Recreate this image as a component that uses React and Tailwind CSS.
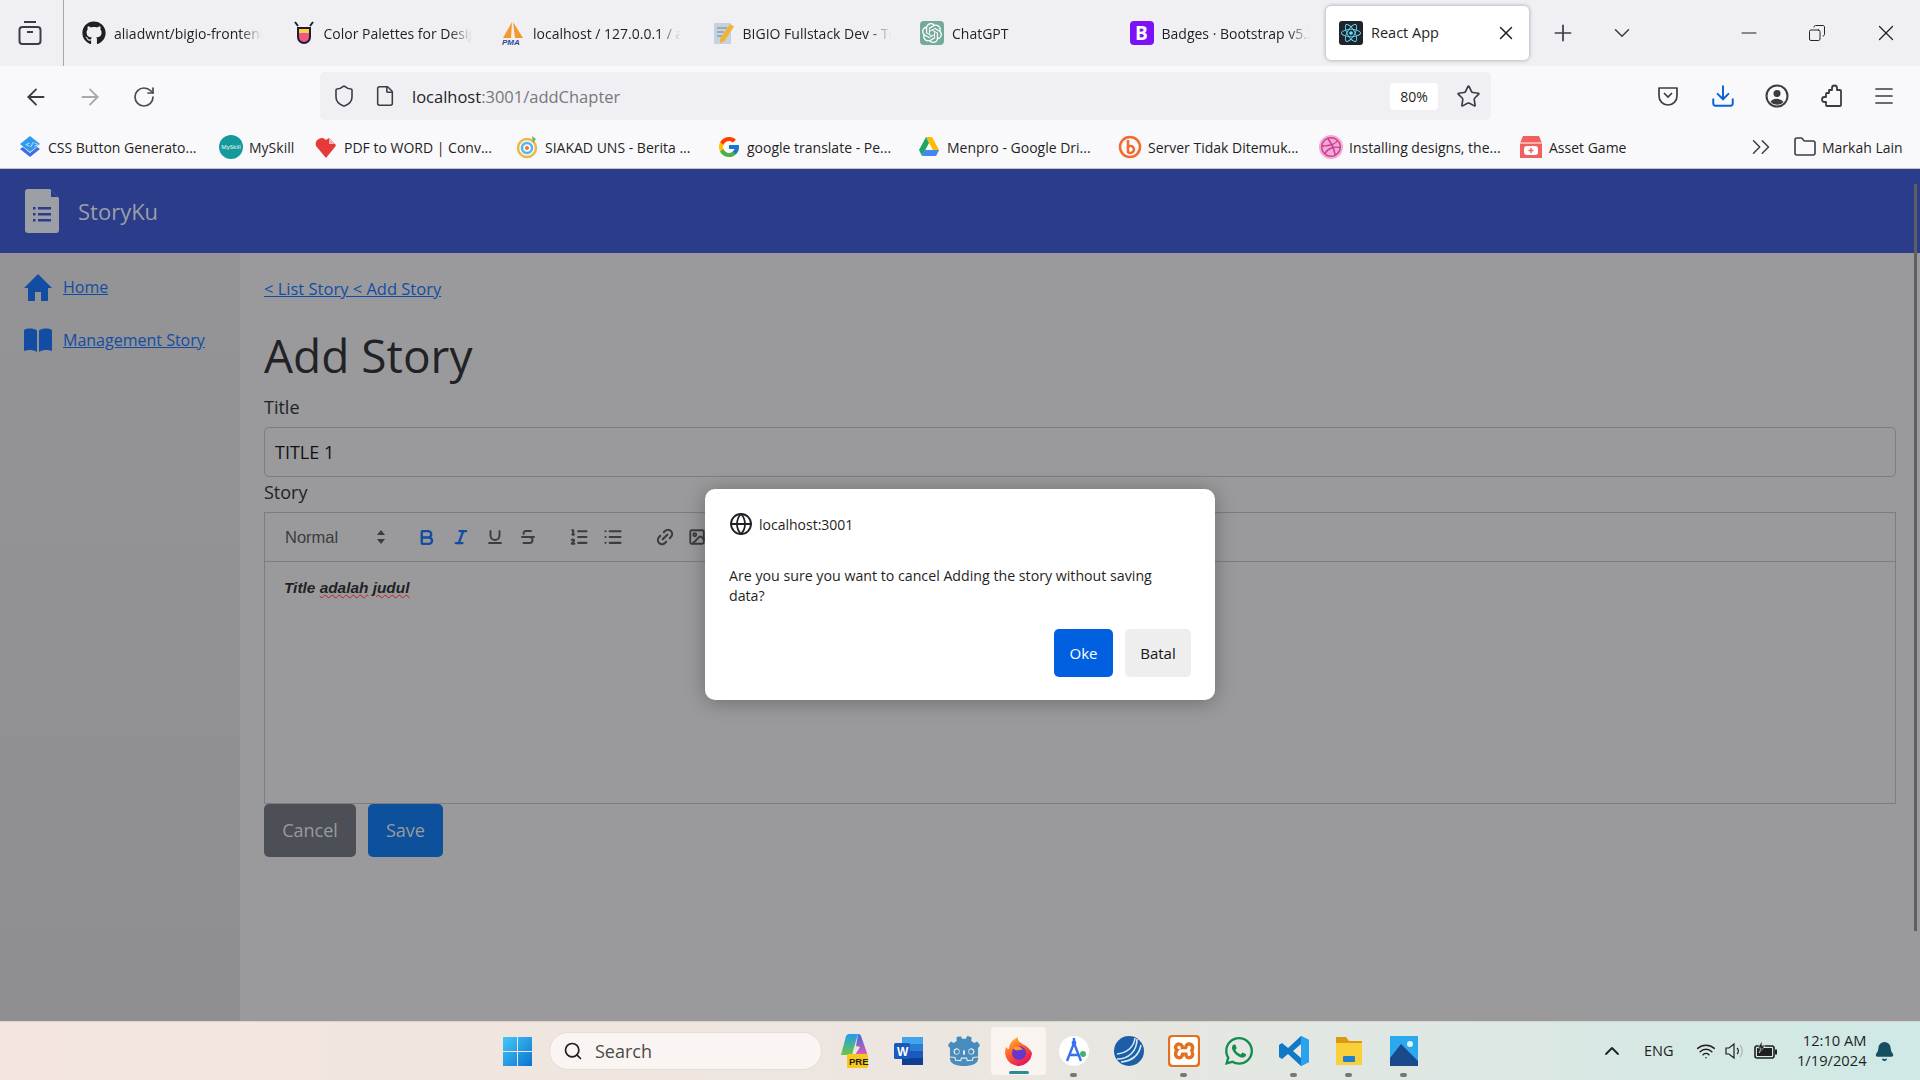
import React from 'react';
import { ArrowLeft, ArrowRight, RotateCw, Shield, File, Star, Download, Menu, Plus, ChevronDown, ChevronUp, Minus, X, ChevronsRight, Folder, Globe, Search, Wifi, Copy, Bold, Italic, Underline, Strikethrough, ListOrdered, List, Link2, Image, Bell } from 'lucide-react';
import { FaGithub, FaWhatsapp } from 'react-icons/fa';
import { FcGoogle } from 'react-icons/fc';
import { SiGodotengine, SiReact, SiDribbble, SiOpenai, SiXampp } from 'react-icons/si';

const Fav = ({ children, cls }) => <span className={"flex h-6 w-6 shrink-0 items-center justify-center " + (cls || "")}>{children}</span>;

const tabs = [
  { t: 'aliadwnt/bigio-frontend', i: <FaGithub className="h-6 w-6 text-[#1f1f24]" /> },
  { t: 'Color Palettes for Designers', i: <svg viewBox="0 0 24 24" className="h-6 w-6"><path d="M5 6h14v10a7 7 0 0 1-14 0z" fill="#1f1f24"/><path d="M7 8h10v4H7z" fill="#f7d14a"/><path d="M7 12h10v4a5 5 0 0 1-10 0z" fill="#f0568b"/><path d="M3 1l3 4M21 1l-3 4" stroke="#1f1f24" strokeWidth="2"/></svg> },
  { t: 'localhost / 127.0.0.1 / app', i: <svg viewBox="0 0 24 24" className="h-6 w-6"><path d="M2 17 L11 1 L10 17zM12 1 L14 17 L22 17z" fill="#f29a2e"/><text x="1" y="24" fontSize="8" fontWeight="700" fontStyle="italic" fill="#2d4a9a" fontFamily="Liberation Sans">PMA</text></svg> },
  { t: 'BIGIO Fullstack Dev - Test', i: <svg viewBox="0 0 24 24" className="h-6 w-6"><rect x="3" y="2" width="17" height="21" rx="1" fill="#c6d3dc"/><path d="M6 7h10M6 11h7M6 15h6" stroke="#8aa0ae" strokeWidth="1.5"/><path d="M9 18 L19 3 L23 5.5 L13 20.5 L9 22z" fill="#f2b233"/></svg> },
  { t: 'ChatGPT', i: <span className="flex h-6 w-6 items-center justify-center rounded bg-[#74aa9c]"><SiOpenai className="h-5 w-5 text-white" /></span> },
  { t: 'Badges · Bootstrap v5.3', i: <span className="flex h-6 w-6 items-center justify-center rounded bg-[#7a12f5] text-[19px] font-bold text-white">B</span> },
];

const marks = [
  { w: 'w-[201px]', t: 'CSS Button Generato...', i: <svg viewBox="0 0 24 24" className="h-6 w-6"><path d="M12 1l10 8-10 8L2 9z" fill="#2f9bf0"/><path d="M2 14l10 8 10-8-3-2-7 6-7-6z" fill="#3d6fe0"/><text x="7.5" y="12" fontSize="7" fill="#fff" fontFamily="Liberation Mono">{'</>'}</text></svg> },
  { w: 'w-[95px]', t: 'MySkill', i: <span className="flex h-6 w-6 items-center justify-center rounded-full bg-[#159a9c] text-[6px] text-white">MySkill</span> },
  { w: 'w-[201px]', t: 'PDF to WORD | Conv...', i: <svg viewBox="0 0 24 24" className="h-6 w-6"><path d="M12 23 L2 11 A6 6 0 0 1 12 5 L15 3 L22 10 L21 12z" fill="#e6393a"/><path d="M15 3 L15 9 L21 9z" fill="#f9b1b1"/></svg> },
  { w: 'w-[202px]', t: 'SIAKAD UNS - Berita ...', i: <svg viewBox="0 0 24 24" className="h-6 w-6"><circle cx="12" cy="13" r="9" fill="none" stroke="#e8b94a" strokeWidth="2.5"/><circle cx="12" cy="13" r="5" fill="none" stroke="#55b7e6" strokeWidth="2.5"/><circle cx="12" cy="13" r="2" fill="#e8764a"/><path d="M17 1 L21 4 L18 8" fill="#5fb878"/></svg> },
  { w: 'w-[200px]', t: 'google translate - Pe...', i: <FcGoogle className="h-6 w-6" /> },
  { w: 'w-[201px]', t: 'Menpro - Google Dri...', i: <svg viewBox="0 0 24 24" className="h-6 w-6"><path d="M9 2h6l7 13-3 6z" fill="#fbbc04"/><path d="M9 2l3 6-7 13-3-6z" fill="#1fa463"/><path d="M5 21h14l3-6H8z" fill="#4285f4"/></svg> },
  { w: 'w-[201px]', t: 'Server Tidak Ditemuk...', i: <svg viewBox="0 0 24 24" className="h-6 w-6"><circle cx="12" cy="12" r="10" fill="none" stroke="#f26a2e" strokeWidth="2.5"/><path d="M10 5v12a3.5 3.5 0 1 0 0-5" fill="none" stroke="#f26a2e" strokeWidth="2.5"/></svg> },
  { w: 'w-[200px]', t: 'Installing designs, the...', i: <span className="flex h-6 w-6 items-center justify-center rounded-full bg-[#f3a8d8]"><SiDribbble className="h-5 w-5 text-[#c9408f]" /></span> },
  { w: 'w-[130px]', t: 'Asset Game', i: <svg viewBox="0 0 24 24" className="h-6 w-6"><path d="M4 1h16l3 7v15H1V8z" fill="#f0605e"/><path d="M1 8h22" stroke="#fff" strokeWidth="1"/><rect x="5" y="11" width="14" height="9" rx="3" fill="#fff"/><path d="M12 13v5M9.5 15.5h5" stroke="#f0605e" strokeWidth="1.5"/></svg> },
];

const Firefox = () => <svg viewBox="0 0 32 32" className="h-8 w-8"><defs><linearGradient id="ff" x1="0" y1="0" x2="0.6" y2="1"><stop offset="0" stopColor="#ffd23a"/><stop offset="0.45" stopColor="#ff6b2c"/><stop offset="1" stopColor="#e5175a"/></linearGradient></defs><path d="M16 31A14 14 0 0 1 3 12c1 1 2 2 3 2 0-5 3-9 9-12-1 4 2 5 6 8 4 2 8 6 8 9a14 14 0 0 1-13 12z" fill="url(#ff)"/><circle cx="16" cy="18" r="7" fill="#6a35c9"/><path d="M10 13c3-3 8-2 10 2-3-1-4 1-8 0z" fill="#ff9a2c"/></svg>;

const WinLogo = () => <svg viewBox="0 0 29 29" className="h-[29px] w-[29px]"><defs><linearGradient id="wn" x1="0" y1="0" x2="1" y2="1"><stop offset="0" stopColor="#45c8f7"/><stop offset="1" stopColor="#0a72d0"/></linearGradient></defs><path d="M0 0h14v14H0zM15 0h14v14H15zM0 15h14v14H0zM15 15h14v14H15z" fill="url(#wn)"/></svg>;

const apps = [
  <svg viewBox="0 0 32 36" className="h-9 w-8"><defs><linearGradient id="cp1" x1="0" y1="0" x2="0" y2="1"><stop offset="0" stopColor="#1f9cf0"/><stop offset="1" stopColor="#6cc644"/></linearGradient><linearGradient id="cp2" x1="0" y1="0" x2="0" y2="1"><stop offset="0" stopColor="#3a6be0"/><stop offset="1" stopColor="#e45bb5"/></linearGradient></defs><path d="M8 3a4 4 0 0 1 4-2h8l-5 17a4 4 0 0 1-4 4H3z" fill="url(#cp1)"/><path d="M20 1a3 3 0 0 1 3 2l6 17a2 2 0 0 1-2 2H17l5-8-4-1z" fill="url(#cp2)"/><rect x="9" y="21" width="21" height="14" rx="1.5" fill="#f7c91c"/><text x="11" y="32" fontSize="9.5" fontWeight="700" fill="#1d1d1d" fontFamily="Liberation Sans">PRE</text></svg>,
  <svg viewBox="0 0 32 32" className="h-8 w-8"><path d="M9 2h21v28H9z" fill="#2b7cd3"/><path d="M9 2h21v7H9z" fill="#41a5ee"/><path d="M9 16h21v7H9z" fill="#185abd"/><path d="M9 23h21v7H9z" fill="#103f91"/><rect x="1" y="8" width="16" height="16" rx="1.5" fill="#185abd"/><text x="4" y="21" fontSize="12" fontWeight="700" fill="#fff" fontFamily="Liberation Sans">W</text></svg>,
  <SiGodotengine className="h-8 w-8 text-[#478cbf]" />,
  <Firefox />,
  <svg viewBox="0 0 32 32" className="h-8 w-8"><circle cx="16" cy="16" r="15" fill="#fff"/><path d="M16 3v5M9 26L16 8l7 18M11 20h10" fill="none" stroke="#3a6ff0" strokeWidth="2.4"/><circle cx="16" cy="8" r="2.4" fill="#3a6ff0"/><circle cx="25" cy="19" r="3" fill="#3fb56a"/></svg>,
  <svg viewBox="0 0 32 32" className="h-8 w-8"><circle cx="16" cy="16" r="15" fill="#1c5ea8"/><path d="M24 4c0 12-8 20-20 20M28 10c-2 10-9 16-20 17M22 3c-1 9-8 15-18 16" fill="none" stroke="#d5e9f8" strokeWidth="1.6"/></svg>,
  <span className="flex h-8 w-8 items-center justify-center rounded bg-[#e4701e]"><SiXampp className="h-7 w-7 text-white" /></span>,
  <FaWhatsapp className="h-8 w-8 text-[#128c4f]" />,
  <svg viewBox="0 0 32 32" className="h-8 w-8"><path d="M23 1l8 4v22l-8 4L10 19l-6 5-3-2v-12l3-2 6 5z" fill="#0f78c9"/><path d="M23 1l8 4v22l-8 4z" fill="#2aa3ee"/><path d="M23 9l-8 7 8 7z" fill="#eee6df"/></svg>,
  <svg viewBox="0 0 32 32" className="h-8 w-8"><path d="M3 2h10l3 4h13v6H3z" fill="#d99a12"/><path d="M3 8h26v22H3z" fill="#f9cf3a"/><rect x="10" y="21" width="12" height="6" rx="1" fill="#1f7fd0"/></svg>,
  <svg viewBox="0 0 32 32" className="h-8 w-8"><rect x="2" y="1" width="28" height="30" fill="#2aa9ef"/><circle cx="22" cy="9" r="3" fill="#dff3fd"/><path d="M2 31V23L13 9l17 17v5z" fill="#1a4a8c"/></svg>,
];
const dotted = [4, 6, 8, 9, 10];

export default function App() {
  return (
    <div className="relative flex h-screen w-full flex-col overflow-hidden bg-[#9a9a9c] text-[#1f1f24] [font-family:'Open_Sans','Noto_Sans',sans-serif]">
      {/* tab strip */}
      <div className="flex h-[66px] shrink-0 items-center bg-[#f0f0f4]">
        <div className="flex h-full w-[64px] shrink-0 items-center justify-center border-r border-[#a8a8ac] pr-[4px]">
          <svg viewBox="0 0 24 26" className="h-[26px] w-[24px]" fill="none" stroke="#3c3c42" strokeWidth="2"><path d="M6 2h12"/><rect x="1.5" y="7" width="21" height="17" rx="3"/><path d="M9 12h6"/></svg>
        </div>
        <div className="flex h-full items-center pl-[4px]">
          {tabs.map((t) => (
            <div key={t.t} className="flex h-full w-[209.5px] items-center gap-[8px] px-[14px]">
              <Fav>{t.i}</Fav>
              <span className="w-[148px] overflow-hidden whitespace-nowrap text-[14px] [mask-image:linear-gradient(to_right,black_85%,transparent)]">{t.t}</span>
            </div>
          ))}
          <div className="ml-[1px] flex h-[54px] w-[203px] items-center gap-[8px] rounded-[5px] bg-white pl-[13px] pr-[12px] shadow-[0_0_4px_rgba(0,0,0,0.35)]">
            <span className="flex h-6 w-6 shrink-0 items-center justify-center rounded-[3px] bg-[#20232a]"><SiReact className="h-5 w-5 text-[#61dafb]" /></span>
            <span className="flex-1 whitespace-nowrap text-[14.5px]">React App</span>
            <X className="h-[22px] w-[22px]" strokeWidth={1.6} />
          </div>
        </div>
        <Plus className="ml-[21px] h-[26px] w-[26px] text-[#3c3c42]" strokeWidth={1.6} />
        <ChevronDown className="ml-[33px] h-[26px] w-[26px] text-[#3c3c42]" strokeWidth={1.4} />
        <div className="ml-auto flex items-center gap-[44px] pr-[21px]">
          <Minus className="h-6 w-6" strokeWidth={1} />
          <Copy className="ml-[3px] h-[18px] w-[18px] -scale-x-100" strokeWidth={1.3} />
          <X className="ml-[3px] h-[26px] w-[26px]" strokeWidth={1.1} />
        </div>
      </div>

      {/* nav bar */}
      <div className="flex h-[60px] shrink-0 items-center bg-[#f9f9fb]">
        <ArrowLeft className="ml-[23px] mt-[2px] h-[26px] w-[26px] text-[#3c3c42]" strokeWidth={1.7} />
        <ArrowRight className="ml-[28px] mt-[2px] h-[26px] w-[26px] text-[#a9a9ad]" strokeWidth={1.7} />
        <RotateCw className="ml-[29px] mt-[2px] h-[24px] w-[24px] text-[#4a4a50]" strokeWidth={1.7} />
        <div className="ml-[164px] flex h-[48px] w-[1171px] items-center rounded-[5px] bg-[#f0f0f4] pl-[12px] pr-[10px]">
          <Shield className="h-[24px] w-[24px] text-[#3c3c42]" strokeWidth={1.6} />
          <File className="ml-[18px] h-[22px] w-[22px] text-[#3c3c42]" strokeWidth={1.7} />
          <span className="ml-[16px] mt-[2px] text-[16.5px]">localhost<span className="text-[#77777c]">:3001/addChapter</span></span>
          <span className="ml-auto flex h-[27px] w-[48px] items-center justify-center rounded-[4px] bg-white text-[14px]">80%</span>
          <Star className="ml-[18px] h-[25px] w-[25px] text-[#3c3c42]" strokeWidth={1.6} />
        </div>
        <div className="ml-auto flex items-center gap-[29.5px] pr-[24px]">
          <svg viewBox="0 0 24 24" className="h-6 w-6" fill="none" stroke="#3c3c42" strokeWidth="1.7"><path d="M3 4h18v8a9 9 0 0 1-18 0z" strokeLinejoin="round"/><path d="M8 9l4 4 4-4"/></svg>
          <Download className="h-[26px] w-[26px] text-[#0a62d6]" strokeWidth={1.8} />
          <svg viewBox="0 0 24 24" className="h-6 w-6"><circle cx="12" cy="12" r="10.5" fill="none" stroke="#3c3c42" strokeWidth="2"/><circle cx="12" cy="9.5" r="3.5" fill="#3c3c42"/><path d="M5.5 18a7 5 0 0 1 13 0 9 9 0 0 1-13 0z" fill="#3c3c42"/></svg>
          <svg viewBox="0 0 24 24" className="h-6 w-6" fill="none" stroke="#3c3c42" strokeWidth="1.8" strokeLinejoin="round"><path d="M10 6h3V4a2.5 2.5 0 0 1 5 0v2h3a1 1 0 0 1 1 1v14a1 1 0 0 1-1 1H8a1 1 0 0 1-1-1v-3H5.5a2.5 2.5 0 0 1 0-5H7v-3a1 1 0 0 1 1-1h2z"/></svg>
          <Menu className="h-[24px] w-[24px] text-[#3c3c42]" strokeWidth={1.7} />
        </div>
      </div>

      {/* bookmarks */}
      <div className="flex h-[43px] shrink-0 items-center border-b border-[#c4c4c8] bg-[#f9f9fb] pl-[18px] text-[14px]">
        {marks.map((m) => (
          <div key={m.t} className={"flex items-center gap-[6px] whitespace-nowrap " + m.w}>
            <Fav>{m.i}</Fav>
            <span>{m.t}</span>
          </div>
        ))}
        <ChevronsRight className="ml-[97px] h-[30px] w-[30px] text-[#3c3c42]" strokeWidth={1.2} />
        <Folder className="ml-[17px] h-[24px] w-[24px] text-[#3c3c42]" strokeWidth={1.6} />
        <span className="ml-[5px] whitespace-nowrap">Markah Lain</span>
      </div>

      {/* app header */}
      <div className="flex h-[84px] shrink-0 items-center bg-[#2a3c8a] pl-[25px]">
        <svg viewBox="0 0 34 44" className="h-[44px] w-[34px]"><path d="M3 0h22l9 9v32a3 3 0 0 1-3 3H3a3 3 0 0 1-3-3V3a3 3 0 0 1 3-3z" fill="#9c9fa6"/><path d="M26 1l7 7h-7z" fill="#2a3c8a"/><path d="M8 18h2.5v2.5H8zM8 24h2.5v2.5H8zM8 30h2.5v2.5H8zM13 18h13v2.5H13zM13 24h13v2.5H13zM13 30h13v2.5H13z" fill="#2a3c8a"/></svg>
        <span className="ml-[19px] text-[22px] text-[#9c9fa6]">StoryKu</span>
      </div>

      {/* body */}
      <div className="flex min-h-0 flex-1">
        <aside className="w-[240px] shrink-0 bg-gradient-to-b from-[#949496] to-[#8f8f91] pl-[24px] pt-[20px] text-[16px] text-[#124da3]">
          <div className="flex h-[28px] items-center gap-[11px]">
            <svg viewBox="0 0 28 27" className="h-[27px] w-[28px]"><path d="M14 0L28 14h-4v13h-7v-9h-6v9H4V14H0z" fill="#124da3"/></svg>
            <a className="underline">Home</a>
          </div>
          <div className="mt-[25px] flex h-[28px] items-center gap-[11px]">
            <svg viewBox="0 0 28 24" className="h-[24px] w-[28px]"><path d="M0 2C4 0 9 0 13 2.500V24C9 21.500 4 21.500 0 23zM15 2.500C19 0 24 0 28 2V23C24 21.500 19 21.500 15 24z" fill="#124da3"/></svg>
            <a className="underline">Management Story</a>
          </div>
        </aside>
        <main className="flex-1 pl-[24px] pr-[24px] pt-[24px]">
          <a className="block text-[16.5px] leading-[24px] text-[#124da3] underline">&lt; List Story &lt; Add Story</a>
          <h1 className="mt-[26px] text-[46px] leading-[56px] text-[#212226]">Add Story</h1>
          <label className="mt-[11px] block text-[18px] leading-[26px] text-[#212226]">Title</label>
          <div className="mt-[7px] flex h-[50px] items-center rounded-[5px] border border-[#7d7d7f] pl-[10px] pt-[1px] text-[18px] text-[#111]">TITLE 1</div>
          <label className="mt-[2px] block text-[18px] leading-[26px] text-[#212226]">Story</label>
          <div className="mt-[7px] flex h-[50px] items-center border border-[#7d7d7f] pl-[20px] text-[#3b3b40]">
            <span className="w-[91px] text-[16.5px] [font-family:'Liberation_Sans',sans-serif]">Normal</span>
            <svg viewBox="0 0 10 14" className="h-[14px] w-[10px]"><path d="M5 0l4 5H1zM5 14l4-5H1z" fill="#3b3b40"/></svg>
            <Bold className="ml-[31px] h-[19px] w-[19px] text-[#124da3]" strokeWidth={3} />
            <Italic className="ml-[16px] h-[18px] w-[18px] text-[#124da3]" strokeWidth={3} />
            <Underline className="ml-[15.5px] h-[18px] w-[18px]" strokeWidth={2.5} />
            <Strikethrough className="ml-[15.5px] h-[18px] w-[18px]" strokeWidth={2.5} />
            <ListOrdered className="ml-[32px] h-[20px] w-[20px]" strokeWidth={2.5} />
            <List className="ml-[14px] h-[20px] w-[20px]" strokeWidth={2.5} />
            <Link2 className="ml-[32px] h-[20px] w-[20px] -rotate-45" strokeWidth={2.5} />
            <Image className="ml-[13px] h-[18px] w-[18px]" strokeWidth={2.5} />
          </div>
          <div className="h-[242px] border-x border-b border-[#7d7d7f] px-[19px] pt-[14px] text-[15.4px] font-bold italic leading-[24px] text-[#212226] [font-family:'Liberation_Sans',sans-serif]">
            Title <span className="underline decoration-wavy decoration-[#c02020] decoration-1">adalah</span> <span className="underline decoration-wavy decoration-[#c02020] decoration-1">judul</span>
          </div>
          <div className="flex gap-[12px]">
            <button className="h-[53px] w-[92px] rounded-[5px] bg-[#4c4f56] text-[18px] text-[#9a9a9c]">Cancel</button>
            <button className="h-[53px] w-[75px] rounded-[5px] bg-[#0d519d] text-[18px] text-[#9a9a9c]">Save</button>
          </div>
        </main>
      </div>

      {/* taskbar */}
      <div className="flex h-[59px] shrink-0 items-center border-t border-[#d8d4d0] bg-gradient-to-r from-[#f4e6de] via-[#ece6e0] to-[#cfe9e6]">
        <div className="ml-[503px]"><WinLogo /></div>
        <div className="ml-[17px] flex h-[38px] w-[273px] items-center rounded-full border border-[#e4dcd6] bg-[#faf5f2] pl-[13px] text-[#4a4a4a]">
          <Search className="h-[20px] w-[20px] text-[#1f1f1f]" strokeWidth={2} />
          <span className="ml-[12px] text-[18px]">Search</span>
        </div>
        <div className="ml-[4px] flex h-full items-center">
          {apps.map((a, i) => (
            <div key={i} className={"relative flex h-[48px] w-[55px] items-center justify-center " + (i === 3 ? "rounded-[4px] bg-[#faf4f0]" : "")}>
              {a}
              {dotted.includes(i) && <span className="absolute bottom-[-2px] h-[4px] w-[7px] rounded-full bg-[#777]" />}
              {i === 3 && <span className="absolute bottom-[1px] h-[3px] w-[20px] rounded-full bg-[#2b8a9a]" />}
            </div>
          ))}
        </div>
        <ChevronUp className="ml-[169px] h-[24px] w-[24px] text-[#1f1f1f]" strokeWidth={1.8} />
        <span className="ml-[20px] text-[14.5px] text-[#1f1f1f]">ENG</span>
        <Wifi className="ml-[22px] h-[20px] w-[20px] text-[#1f1f1f]" strokeWidth={1.8} />
        <svg viewBox="0 0 22 20" className="ml-[8px] h-[20px] w-[22px]" fill="none" stroke="#1f1f1f" strokeWidth="1.2"><path d="M2 7h3l5-4v14l-5-4H2z"/><path d="M13 7a4 4 0 0 1 0 6"/><path d="M16 4a9 9 0 0 1 0 12" stroke="#a8b4b4"/></svg>
        <svg viewBox="0 0 24 20" className="ml-[8px] h-[20px] w-[24px]"><rect x="1" y="5" width="19" height="12" rx="2" fill="none" stroke="#1f1f1f" strokeWidth="1.6"/><path d="M3 7h15v8H3z" fill="#1f1f1f"/><rect x="21" y="8.5" width="2" height="5" fill="#1f1f1f"/><path d="M8 0L4 7h3l-2 5 6-7H8z" fill="#1f1f1f" stroke="#d6e9e6" strokeWidth="0.6"/></svg>
        <div className="mb-[2px] ml-[8px] w-[81px] text-right text-[14.7px] leading-[20px] text-[#1f1f1f]"><div>12:10 AM</div><div>1/19/2024</div></div>
        <Bell className="ml-[7px] h-[21px] w-[21px] fill-[#164f60] text-[#164f60]" />
      </div>

      {/* scrollbar thumb */}
      <div className="absolute left-[1914px] top-[184px] h-[747px] w-[3px] bg-[#5f5f61]" />

      {/* alert dialog */}
      <div className="absolute left-[705px] top-[489px] h-[211px] w-[510px] rounded-[10px] bg-white pl-[24px] pr-[24px] pt-[23px] shadow-[0_2px_20px_rgba(0,0,0,0.3)]">
        <div className="flex items-center gap-[6px]">
          <Globe className="h-[24px] w-[24px] text-[#1f1f24]" strokeWidth={1.8} />
          <span className="text-[14px] text-[#1f1f24]">localhost:3001</span>
        </div>
        <p className="mt-[30px] w-[440px] text-[14.2px] leading-[20px] text-[#1f1f24]">Are you sure you want to cancel Adding the story without saving data?</p>
        <div className="mt-[23px] flex justify-end gap-[12px]">
          <button className="h-[48px] w-[59px] rounded-[5px] bg-[#0060df] text-[15px] text-white">Oke</button>
          <button className="h-[48px] w-[66px] rounded-[5px] bg-[#eeeeee] text-[15px] text-[#15141a]">Batal</button>
        </div>
      </div>
    </div>
  );
}
